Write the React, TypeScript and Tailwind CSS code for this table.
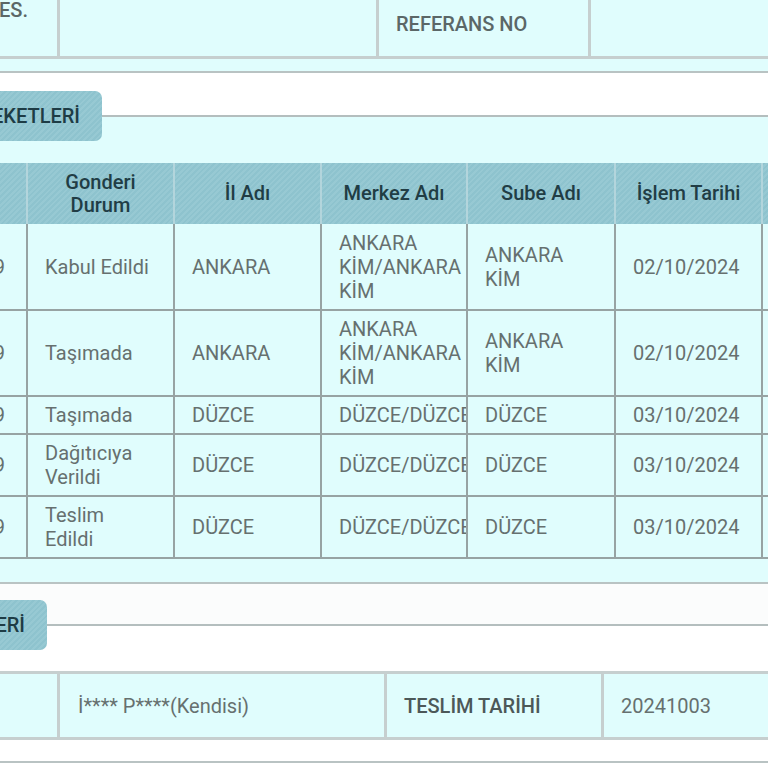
const rows = [
  { h: "h-[86px]", durum: ["Kabul Edildi"], il: "ANKARA", merkez: ["ANKARA", "KİM/ANKARA", "KİM"], sube: ["ANKARA", "KİM"], tarih: "02/10/2024" },
  { h: "h-[86px]", durum: ["Taşımada"], il: "ANKARA", merkez: ["ANKARA", "KİM/ANKARA", "KİM"], sube: ["ANKARA", "KİM"], tarih: "02/10/2024" },
  { h: "h-[38px]", durum: ["Taşımada"], il: "DÜZCE", merkez: ["DÜZCE/DÜZCE"], sube: ["DÜZCE"], tarih: "03/10/2024" },
  { h: "h-[62px]", durum: ["Dağıtıcıya", "Verildi"], il: "DÜZCE", merkez: ["DÜZCE/DÜZCE"], sube: ["DÜZCE"], tarih: "03/10/2024" },
  { h: "h-[62px]", durum: ["Teslim", "Edildi"], il: "DÜZCE", merkez: ["DÜZCE/DÜZCE"], sube: ["DÜZCE"], tarih: "03/10/2024" },
];

function Lines({ lines }: { lines: string[] }) {
  return (
    <>
      {lines.map((l, i) => (
        <div key={i} className="whitespace-nowrap">
          {l}
        </div>
      ))}
    </>
  );
}

const td =
  "border-x-2 border-b-2 border-[#97a3a3] pl-[17px] text-left align-middle overflow-hidden whitespace-nowrap";
const th =
  "border-x-2 border-[#b3d5dc] text-center align-middle font-medium text-[#213d45] leading-[23px] px-[6px]";

export default function App() {
  return (
    <div className="w-[768px] h-[768px] overflow-hidden bg-white font-[Roboto,'Noto_Sans',sans-serif]">
      <div className="-ml-[120px] w-[1100px]">
        {/* top info row */}
        <div className="bg-[#e0fdfd] pb-[12px]">
          <div className="-mt-[8px] flex h-[67px] border-b-[3px] border-[#c6cfcf] text-[20px] leading-[24px] font-medium text-[#5b6767]">
            <div className="w-[180px] shrink-0 border-r-[3px] border-[#c6cfcf] flex justify-end items-start pr-[29px] pt-[6px] overflow-hidden">
              <span className="whitespace-nowrap">ADRES.</span>
            </div>
            <div className="w-[319px] shrink-0 border-r-[3px] border-[#c6cfcf]" />
            <div className="w-[212px] shrink-0 border-r-[3px] border-[#c6cfcf] flex items-center pl-[17px]">
              <span className="whitespace-nowrap">REFERANS NO</span>
            </div>
            <div className="flex-1" />
          </div>
        </div>
        <div className="h-[2px] bg-[#b9c3c3]" />
        <div className="h-[18px] bg-white" />

        {/* legend 1 */}
        <div className="h-[50px] flex bg-[linear-gradient(to_bottom,#ffffff_0px,#ffffff_24px,#b4bebe_24px,#b4bebe_26px,#e0fdfd_26px)]">
          <div className="w-[222px] h-[50px] shrink-0 rounded-[7px] flex items-center justify-end pr-[22px] overflow-hidden bg-[repeating-linear-gradient(135deg,#8ec3ce_0px,#8ec3ce_2px,#97c9d3_2px,#97c9d3_4px)]">
            <span className="whitespace-nowrap text-[20px] font-medium text-[#1e3c45]">GÖNDERİ HAREKETLERİ</span>
          </div>
        </div>

        {/* movements table */}
        <div className="bg-[#e0fdfd] pt-[22px] pb-[23px]">
          <table className="-ml-[1px] table-fixed border-collapse w-[1029px] text-[20px] leading-[24px] text-[#66706f]">
            <colgroup>
              <col className="w-[147px]" />
              <col className="w-[147px]" />
              <col className="w-[147px]" />
              <col className="w-[146px]" />
              <col className="w-[148px]" />
              <col className="w-[147px]" />
              <col className="w-[147px]" />
            </colgroup>
            <thead>
              <tr className="h-[61px] bg-[repeating-linear-gradient(135deg,#8ec3ce_0px,#8ec3ce_2px,#97c9d3_2px,#97c9d3_4px)]">
                <th className={th}>Barkod</th>
                <th className={th}>
                  Gonderi
                  <br />
                  Durum
                </th>
                <th className={th}>İl Adı</th>
                <th className={th}>Merkez Adı</th>
                <th className={th}>Sube Adı</th>
                <th className={th}>İşlem Tarihi</th>
                <th className={th}>İşlem Saati</th>
              </tr>
            </thead>
            <tbody>
              {rows.map((r, i) => (
                <tr key={i} className={r.h}>
                  <td className="border-x-2 border-b-2 border-[#97a3a3] text-right pr-[21px] align-middle overflow-hidden whitespace-nowrap">
                    2732419029
                  </td>
                  <td className={td}>
                    <Lines lines={r.durum} />
                  </td>
                  <td className={td}>{r.il}</td>
                  <td className={td}>
                    <Lines lines={r.merkez} />
                  </td>
                  <td className={td}>
                    <Lines lines={r.sube} />
                  </td>
                  <td className={td}>{r.tarih}</td>
                  <td className={td}>12:09</td>
                </tr>
              ))}
            </tbody>
          </table>
        </div>

        <div className="h-[2px] bg-[#b9c3c3]" />
        <div className="h-[16px] bg-[#fbfcfc]" />

        {/* legend 2 */}
        <div className="h-[50px] flex bg-[linear-gradient(to_bottom,#fbfcfc_0px,#fbfcfc_24px,#b4bebe_24px,#b4bebe_26px,#ffffff_26px)]">
          <div className="w-[167px] h-[50px] shrink-0 rounded-[7px] flex items-center justify-end pr-[22px] overflow-hidden bg-[repeating-linear-gradient(135deg,#8ec3ce_0px,#8ec3ce_2px,#97c9d3_2px,#97c9d3_4px)]">
            <span className="whitespace-nowrap text-[20px] font-medium text-[#1e3c45]">TESLİM BİLGİLERİ</span>
          </div>
        </div>

        <div className="h-[21px] bg-white" />

        {/* delivery row */}
        <div className="flex h-[69px] border-y-[3px] border-[#c6cfcf] bg-[#e0fdfd] text-[20px] leading-[24px] text-[#66706f]">
          <div className="w-[180px] shrink-0 border-r-[3px] border-[#c6cfcf]" />
          <div className="w-[327px] shrink-0 border-r-[3px] border-[#c6cfcf] flex items-center pl-[18px]">
            <span className="whitespace-nowrap">İ**** P****(Kendisi)</span>
          </div>
          <div className="w-[217px] shrink-0 border-r-[3px] border-[#c6cfcf] flex items-center pl-[17px]">
            <span className="whitespace-nowrap font-medium text-[#4c5858]">TESLİM TARİHİ</span>
          </div>
          <div className="flex-1 flex items-center pl-[17px]">
            <span className="whitespace-nowrap">20241003</span>
          </div>
        </div>

        <div className="h-[21px] bg-white" />
        <div className="h-[2px] bg-[#b9c3c3]" />
        <div className="h-[20px] bg-white" />
      </div>
    </div>
  );
}
